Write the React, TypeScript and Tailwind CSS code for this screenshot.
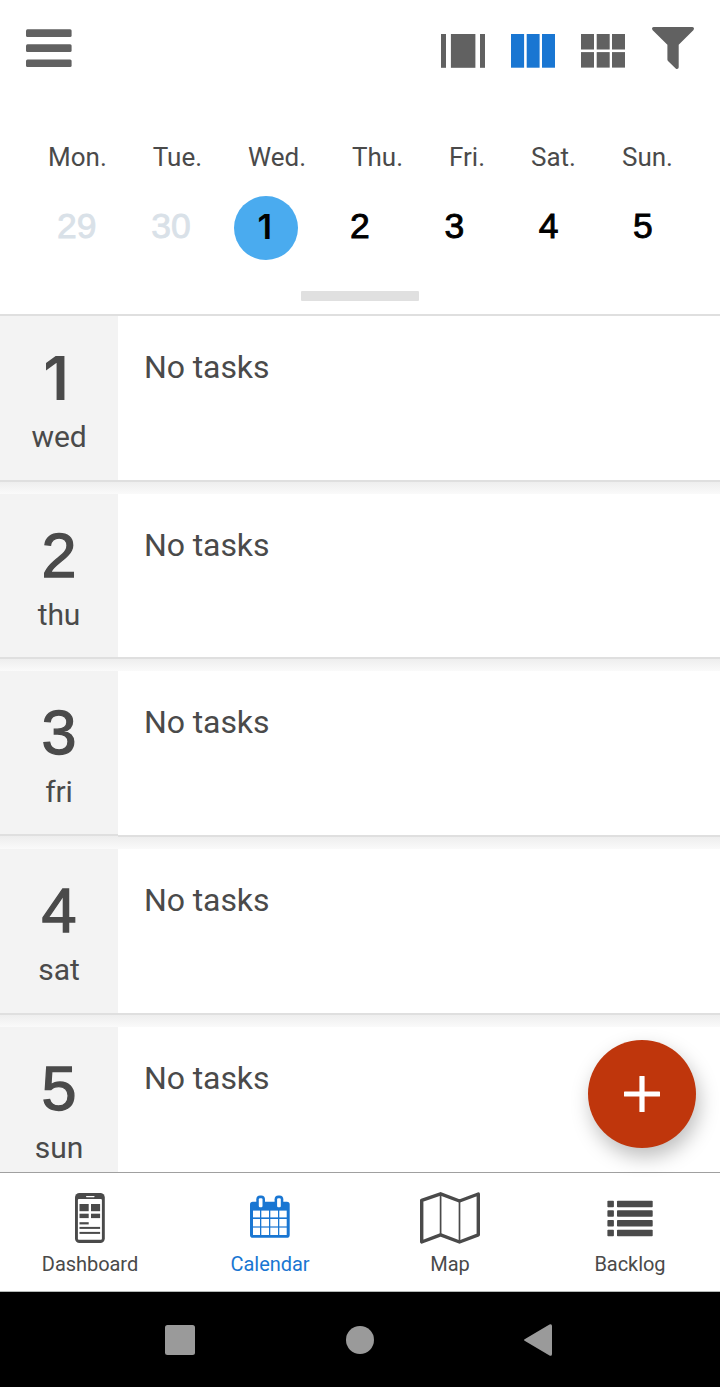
import React from "react";

const weekdays = ["Mon.", "Tue.", "Wed.", "Thu.", "Fri.", "Sat.", "Sun."];

const dates = [
  { value: "29", muted: true },
  { value: "30", muted: true },
  { value: "1", selected: true },
  { value: "2" },
  { value: "3" },
  { value: "4" },
  { value: "5" },
];

const days = [
  { date: "1", name: "wed", row: "h-[178px]", label: "h-[166px] pt-[30px]", body: "h-[166px]" },
  { date: "2", name: "thu", row: "h-[177px]", label: "h-[165px] pt-[30px]", body: "h-[165px]" },
  { date: "3", name: "fri", row: "h-[178px]", label: "mt-px h-[164px] pt-[29px]", body: "h-[166px]" },
  { date: "4", name: "sat", row: "h-[178px]", label: "h-[166px] pt-[30px]", body: "h-[166px]" },
  { date: "5", name: "sun", row: "h-[178px]", label: "h-[166px] pt-[30px]", body: "h-[166px]" },
];

function MenuIcon() {
  return (
    <svg width="46" height="40" viewBox="0 0 46 40" fill="#616161">
      <rect x="0" y="1.2" width="45.6" height="7.7" rx="1.5" />
      <rect x="0" y="16.2" width="45.6" height="7.7" rx="1.5" />
      <rect x="0" y="31.4" width="45.6" height="7.7" rx="1.5" />
    </svg>
  );
}

function DayViewIcon() {
  return (
    <svg width="44" height="34" viewBox="0 0 44 34" fill="#616161">
      <rect x="0" width="5" height="33.8" />
      <rect x="9.9" width="24.5" height="33.8" />
      <rect x="39" width="5" height="33.8" />
    </svg>
  );
}

function WeekViewIcon() {
  return (
    <svg width="44" height="34" viewBox="0 0 44 34" fill="#1976d2">
      <rect x="0" width="13.1" height="33.7" />
      <rect x="15.7" width="12.9" height="33.7" />
      <rect x="31" width="13" height="33.7" />
    </svg>
  );
}

function MonthViewIcon() {
  return (
    <svg width="44" height="34" viewBox="0 0 44 34" fill="#616161">
      {[0, 18.1].map((y) =>
        [0, 15.7, 31].map((x) => <rect key={`${x}-${y}`} x={x} y={y} width="13" height="15.5" />),
      )}
    </svg>
  );
}

function FilterIcon() {
  return (
    <svg width="42" height="42" viewBox="0 0 42 42" fill="#616161">
      <path d="M1.6 0H40.4Q42 0 42 1.6Q42 2.5 41.3 3.2L26.7 17.8V40.3Q26.7 42 25 42Q24.3 42 23.7 41.4L16 34Q15.4 33.5 15.4 32.6V17.8L0.7 3.2Q0 2.5 0 1.6Q0 0 1.6 0Z" />
    </svg>
  );
}

function DashboardIcon() {
  return (
    <svg width="30" height="50" viewBox="0 0 30 50">
      <rect width="29.8" height="50" rx="4.5" fill="#4a4a4a" />
      <rect x="2.9" y="6" width="24" height="40.7" rx="1" fill="#fff" />
      <rect x="11" y="2.9" width="8.6" height="1.3" rx="0.6" fill="#fff" />
      <g fill="#4a4a4a">
        <rect x="4.5" y="11" width="9.2" height="7.2" />
        <rect x="16" y="11" width="9.1" height="7.2" />
        <rect x="4.5" y="20.7" width="9.2" height="4.4" />
        <rect x="16" y="20.7" width="9.1" height="4.4" />
        <rect x="4.5" y="29.2" width="9.2" height="2.2" />
        <rect x="4.5" y="33.9" width="20.6" height="2" />
        <rect x="4.5" y="38.9" width="20.6" height="2" />
      </g>
    </svg>
  );
}

function CalendarIcon() {
  return (
    <svg width="40" height="46" viewBox="0 0 40 46">
      <g fill="#1976d2">
        <rect y="6.7" width="39.7" height="36" rx="2.8" />
        <rect x="6.3" y="0.4" width="8.7" height="15" rx="3.8" />
        <rect x="24.6" y="0.4" width="8.7" height="15" rx="3.8" />
      </g>
      <g fill="#fff">
        <rect x="8.8" y="3.3" width="3.7" height="9" rx="1.2" />
        <rect x="27.1" y="3.3" width="3.7" height="9" rx="1.2" />
        {[
          [15.6, 6.8],
          [24, 7.4],
          [32.6, 7.4],
        ].map(([y, h]) => (
          <g key={y}>
            <rect x="3" y={y} width="7" height={h} />
            <rect x="11.3" y={y} width="7.7" height={h} />
            <rect x="20.3" y={y} width="7.7" height={h} />
            <rect x="29.3" y={y} width="7.4" height={h} />
          </g>
        ))}
      </g>
    </svg>
  );
}

function MapIcon() {
  return (
    <svg width="60" height="52" viewBox="0 0 60 52" fill="none" stroke="#4a4a4a">
      <path
        d="M1.7 8.4L20.6 1.8L39.5 9L58.3 2V42.8L39.5 50L20.6 42.8L1.7 50Z"
        strokeWidth="3.4"
        strokeLinejoin="round"
      />
      <path d="M20.6 2V43M39.5 9V50" strokeWidth="1.7" />
    </svg>
  );
}

function BacklogIcon() {
  return (
    <svg width="46" height="37" viewBox="0 0 46 37" fill="#4a4a4a">
      {[0.7, 10.3, 20, 29.8].map((y) => (
        <g key={y}>
          <rect x="0.4" y={y} width="6.5" height="6.5" rx="0.8" />
          <rect x="10" y={y} width="35.7" height="6.5" rx="0.8" />
        </g>
      ))}
    </svg>
  );
}

const tabs = [
  { label: "Dashboard", icon: <DashboardIcon />, color: "text-[#4a4a4a]" },
  { label: "Calendar", icon: <CalendarIcon />, color: "text-[#1976d2]" },
  { label: "Map", icon: <MapIcon />, color: "text-[#4a4a4a]" },
  { label: "Backlog", icon: <BacklogIcon />, color: "text-[#4a4a4a]" },
];

export default function App() {
  return (
    <div className="relative flex h-[1387px] w-[720px] flex-col overflow-hidden bg-white font-['Roboto',sans-serif] text-[#4a4a4a]">
      <header className="flex h-[316px] shrink-0 flex-col border-b-2 border-[#dfdfdf]">
        <div className="flex h-[140px] items-start justify-between px-[26px]">
          <button className="mt-[28px]" aria-label="Menu">
            <MenuIcon />
          </button>
          <div className="flex items-start">
            <button className="mt-[34px] mr-[26px]" aria-label="Day view">
              <DayViewIcon />
            </button>
            <button className="mt-[34px] mr-[26px]" aria-label="Week view">
              <WeekViewIcon />
            </button>
            <button className="mt-[34px] mr-[27px]" aria-label="Month view">
              <MonthViewIcon />
            </button>
            <button className="mt-[27px]" aria-label="Filter">
              <FilterIcon />
            </button>
          </div>
        </div>
        <div className="flex h-[56px] justify-between pt-px pr-[47px] pl-12 text-[26px] leading-8">
          {weekdays.map((day) => (
            <span key={day}>{day}</span>
          ))}
        </div>
        <div className="grid h-16 grid-cols-7 px-[30px] font-['Liberation_Sans',sans-serif] text-[35.5px] leading-[60px]">
          {dates.map((d) => (
            <div key={d.value} className="flex justify-center">
              <span
                className={
                  d.selected
                    ? "h-16 w-16 rounded-full bg-[#4aabef] pr-0.5 text-center font-['Inter',sans-serif] text-[34.5px] leading-[62px] font-semibold text-black"
                    : d.muted
                      ? "pr-px text-[#d9e1e8] [-webkit-text-stroke:0.8px_#d9e1e8]"
                      : "text-black [-webkit-text-stroke:0.9px_#000]"
                }
              >
                {d.value}
              </span>
            </div>
          ))}
        </div>
        <div className="mt-[31px] h-2.5 w-[118px] self-center rounded-[1px] bg-[#e0e0e0]" />
      </header>

      <main className="flex h-[856px] shrink-0 flex-col overflow-hidden">
        {days.map((d) => (
          <section
            key={d.date}
            className={`flex shrink-0 items-start bg-[linear-gradient(to_top,#fafafa_0px,#ededed_13px,#f3f3f3_14px,#f3f3f3_100%)] ${d.row}`}
          >
            <div
              className={`flex w-[118px] shrink-0 flex-col items-center border-b-2 border-[#dfdfdf] bg-[#f3f3f3] ${d.label}`}
            >
              <span
                className={
                  d.date === "1"
                    ? "h-16 pr-1.5 font-['Inter',sans-serif] text-[60.5px] leading-[64px] font-semibold"
                    : "h-16 font-['Liberation_Sans',sans-serif] text-[63px] leading-[62px] [-webkit-text-stroke:1.3px_#4a4a4a]"
                }
              >
                {d.date}
              </span>
              <span className="mt-[9px] text-[30px] leading-9 tracking-[-0.1px]">{d.name}</span>
            </div>
            <div
              className={`flex-1 border-b-2 border-[#dfdfdf] bg-white pt-8 pl-[26px] text-[32px] leading-[38px] tracking-[-0.1px] ${d.body}`}
            >
              No tasks
            </div>
          </section>
        ))}
      </main>

      <nav className="grid h-[120px] shrink-0 grid-cols-4 border-t border-b border-t-[#a0a0a0] border-b-[#b5bab7] bg-white">
        {tabs.map((tab) => (
          <button key={tab.label} className={`flex flex-col items-center pt-[13px] ${tab.color}`}>
            <span className="flex h-[64px] w-[60px] items-center justify-center">{tab.icon}</span>
            <span className="mt-0.5 text-[20px] leading-6 tracking-[-0.05px] whitespace-nowrap">{tab.label}</span>
          </button>
        ))}
      </nav>

      <footer className="flex flex-1 bg-black">
        <svg width="720" height="95" viewBox="0 0 720 95" fill="#9a9a9a">
          <rect x="165" y="33" width="30" height="30" rx="2.5" />
          <circle cx="360" cy="48" r="14" />
          <path d="M525 47L549.5 32.4Q552 31.5 552 34V62Q552 64.5 549.5 63.6L525 49Q523 48 525 47Z" />
        </svg>
      </footer>

      <button
        aria-label="Add task"
        className="absolute top-[1040px] left-[588px] flex h-[108px] w-[108px] items-center justify-center rounded-full bg-[#bf360c] shadow-[3px_9px_20px_rgba(0,0,0,0.26)]"
      >
        <svg width="36" height="36" viewBox="0 0 36 36" fill="#fff">
          <rect x="15.4" width="5.2" height="36" rx="0.6" />
          <rect y="15.4" width="36" height="5.2" rx="0.6" />
        </svg>
      </button>
    </div>
  );
}
